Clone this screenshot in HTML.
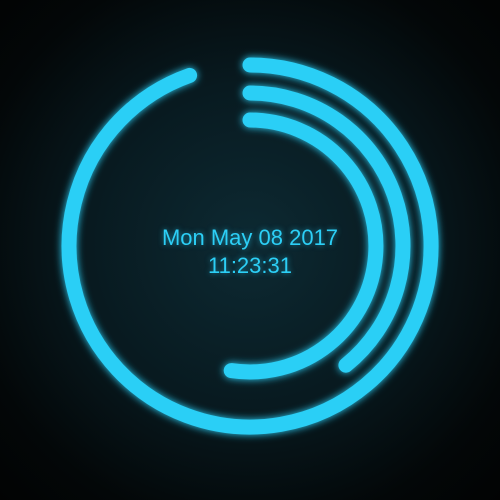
<!DOCTYPE html>
<html><head><style>
html,body{margin:0;padding:0;width:500px;height:500px;overflow:hidden;background:radial-gradient(circle at 250px 245px,#0d2a33 0%,#081a20 45%,#030708 80%,#020303 100%);}
svg{position:absolute;left:0;top:0}
.t{position:absolute;left:0;width:500px;text-align:center;font-family:"Liberation Sans",sans-serif;font-size:22px;color:#2ccff6;text-shadow:0 0 6px rgba(44,207,246,0.6)}
</style></head><body>
<svg width="500" height="500">
<defs><filter id="g" x="-20%" y="-20%" width="140%" height="140%"><feGaussianBlur stdDeviation="4" result="b"/><feMerge><feMergeNode in="b"/><feMergeNode in="SourceGraphic"/></feMerge></filter></defs>
<g fill="none" stroke="#2ccff6" stroke-width="15" stroke-linecap="round" filter="url(#g)">
<path d="M250 65 A181 181 0 1 1 189.6 75.4"/>
<path d="M250 93 A153 153 0 0 1 345.9 365.2"/>
<path d="M250 120 A126 126 0 1 1 231.2 370.6"/>
</g>
</svg>
<div class="t" style="top:225px">Mon May 08 2017</div>
<div class="t" style="top:253px">11:23:31</div>
</body></html>
